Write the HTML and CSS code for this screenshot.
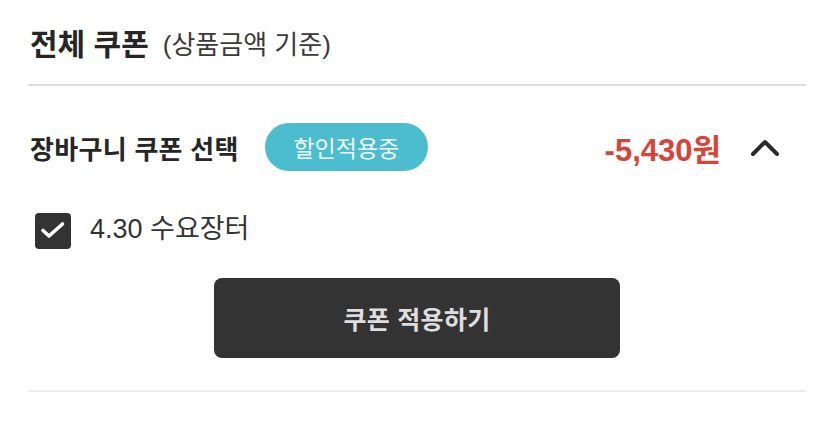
FILE: index.html
```html
<!DOCTYPE html>
<html lang="ko">
<head>
<meta charset="utf-8">
<link rel="stylesheet" href="styles.css">
</head>
<body>
<div class="page">
  <div class="header">
    <span class="title">전체 쿠폰</span>
    <span class="subtitle">(상품금액 기준)</span>
  </div>
  <div class="row">
    <span class="row-title">장바구니 쿠폰 선택</span>
    <span class="badge">할인적용중</span>
    <span class="price">-5,430원</span>
    <svg class="chevron" width="30" height="20" viewBox="0 0 30 20"><path d="M3 17 L15 5 L27 17" fill="none" stroke="#2b2b2b" stroke-width="4" stroke-linecap="round" stroke-linejoin="round"/></svg>
  </div>
  <div class="item">
    <span class="checkbox"><svg width="36" height="36" viewBox="0 0 36 36"><path d="M8 17.5 L14 23 L27.5 11" fill="none" stroke="#fff" stroke-width="3.6" stroke-linecap="round" stroke-linejoin="round"/></svg></span>
    <span class="item-label">4.30 수요장터</span>
  </div>
  <button class="apply">쿠폰 적용하기</button>
  <div class="bottom-line"></div>
</div>
</body>
</html>
```
FILE: styles.css
```css
html, body {
  margin: 0;
  padding: 0;
  background: #fff;
}
body {
  font-family: "Liberation Sans", "Noto Sans CJK KR", sans-serif;
  color: #2b2b2b;
}
.page {
  width: 778px;
  margin-left: 28px;
}
.header {
  height: 86px;
  display: flex;
  align-items: center;
  padding-left: 2px;
  border-bottom: 2px solid #dcdcdc;
  box-sizing: border-box;
}
.title {
  font-size: 30px;
  font-weight: 700;
  color: #262626;
}
.subtitle {
  font-size: 26px;
  margin-left: 14px;
  color: #3a3a3a;
}
.row {
  height: 122px;
  display: flex;
  align-items: center;
  padding-left: 2px;
  padding-right: 26px;
}
.row-title {
  font-size: 26px;
  font-weight: 700;
  color: #262626;
  letter-spacing: 0.3px;
}
.badge {
  margin-left: 26px;
  width: 163px;
  height: 48px;
  border-radius: 24px;
  background: #4bbdce;
  color: #f2fbfc;
  font-size: 23px;
  display: flex;
  align-items: center;
  justify-content: center;
}
.price {
  margin-left: auto;
  font-size: 31px;
  font-weight: 700;
  color: #d8433a;
}
.chevron {
  margin-left: 29px;
  display: block;
}
.item {
  height: 46px;
  display: flex;
  align-items: center;
  padding-left: 7px;
}
.checkbox {
  width: 36px;
  height: 36px;
  border-radius: 4px;
  background: #333;
  display: block;
}
.checkbox svg {
  display: block;
}
.item-label {
  margin-left: 19px;
  font-size: 27px;
  line-height: 1;
  color: #333;
  padding-bottom: 4px;
}
.apply {
  display: flex;
  align-items: center;
  justify-content: center;
  margin: 24px auto 0;
  width: 406px;
  height: 80px;
  border: none;
  border-radius: 8px;
  background: #333;
  color: #dedede;
  font-family: "Liberation Sans", "Noto Sans CJK KR", sans-serif;
  font-size: 25px;
  font-weight: 700;
  letter-spacing: 0.3px;
}
.bottom-line {
  margin-top: 32px;
  height: 2px;
  background: #eeeeee;
}
```
